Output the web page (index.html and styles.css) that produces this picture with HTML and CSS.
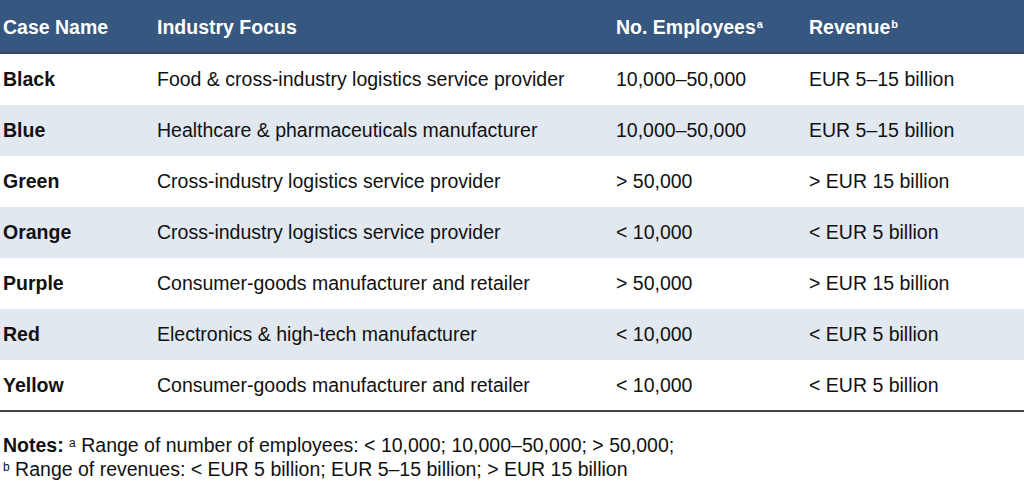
FILE: index.html
```html
<!DOCTYPE html>
<html>
<head>
<meta charset="utf-8">
<link rel="stylesheet" href="styles.css">
</head>
<body>
<table class="cases">
  <thead>
    <tr>
      <th class="c1">Case Name</th>
      <th class="c2">Industry Focus</th>
      <th class="c3">No. Employees<sup>a</sup></th>
      <th class="c4">Revenue<sup>b</sup></th>
    </tr>
  </thead>
  <tbody>
    <tr><td class="name">Black</td><td>Food &amp; cross-industry logistics service provider</td><td>10,000–50,000</td><td>EUR 5–15 billion</td></tr>
    <tr><td class="name">Blue</td><td>Healthcare &amp; pharmaceuticals manufacturer</td><td>10,000–50,000</td><td>EUR 5–15 billion</td></tr>
    <tr><td class="name">Green</td><td>Cross-industry logistics service provider</td><td>&gt; 50,000</td><td>&gt; EUR 15 billion</td></tr>
    <tr><td class="name">Orange</td><td>Cross-industry logistics service provider</td><td>&lt; 10,000</td><td>&lt; EUR 5 billion</td></tr>
    <tr><td class="name">Purple</td><td>Consumer-goods manufacturer and retailer</td><td>&gt; 50,000</td><td>&gt; EUR 15 billion</td></tr>
    <tr><td class="name">Red</td><td>Electronics &amp; high-tech manufacturer</td><td>&lt; 10,000</td><td>&lt; EUR 5 billion</td></tr>
    <tr><td class="name">Yellow</td><td>Consumer-goods manufacturer and retailer</td><td>&lt; 10,000</td><td>&lt; EUR 5 billion</td></tr>
  </tbody>
</table>
<div class="notes">
  <p><b>Notes:</b> <sup>a</sup> Range of number of employees: &lt; 10,000; 10,000–50,000; &gt; 50,000;</p>
  <p><sup>b</sup> Range of revenues: &lt; EUR 5 billion; EUR 5–15 billion; &gt; EUR 15 billion</p>
</div>
</body>
</html>
```

FILE: styles.css
```css
html, body {
  margin: 0;
  padding: 0;
  background: #ffffff;
}
body {
  font-family: "Liberation Sans", Arial, sans-serif;
  color: #111111;
  width: 1024px;
  height: 492px;
  overflow: hidden;
}
.cases {
  width: 1024px;
  border-collapse: collapse;
  table-layout: fixed;
  font-size: 19.5px;
}
.cases th, .cases td {
  text-align: left;
  padding: 0 0 0 3px;
  white-space: nowrap;
}
.cases th {
  background: #355780;
  color: #ffffff;
  font-weight: bold;
  height: 50px;
  padding-top: 2px;
  border-bottom: 2px solid #3a4656;
}
.cases sup {
  font-size: 11px;
  vertical-align: 6px;
  line-height: 0;
  margin-left: 1px;
}
.c1 { width: 151px; }
.c2 { width: 456px; }
.c3 { width: 190px; }
.cases td {
  height: 51px;
}
.cases tbody tr:nth-child(even) td {
  background: #e1e8f0;
}
.cases tbody tr:last-child td {
  height: 50px;
  border-bottom: 2px solid #444444;
}
.cases td.name {
  font-weight: bold;
}
.notes {
  padding: 21px 0 0 3px;
  font-size: 19.5px;
}
.notes p {
  margin: 0;
  line-height: 24px;
}
.notes sup {
  font-size: 12px;
  vertical-align: 5px;
  line-height: 0;
}
```
